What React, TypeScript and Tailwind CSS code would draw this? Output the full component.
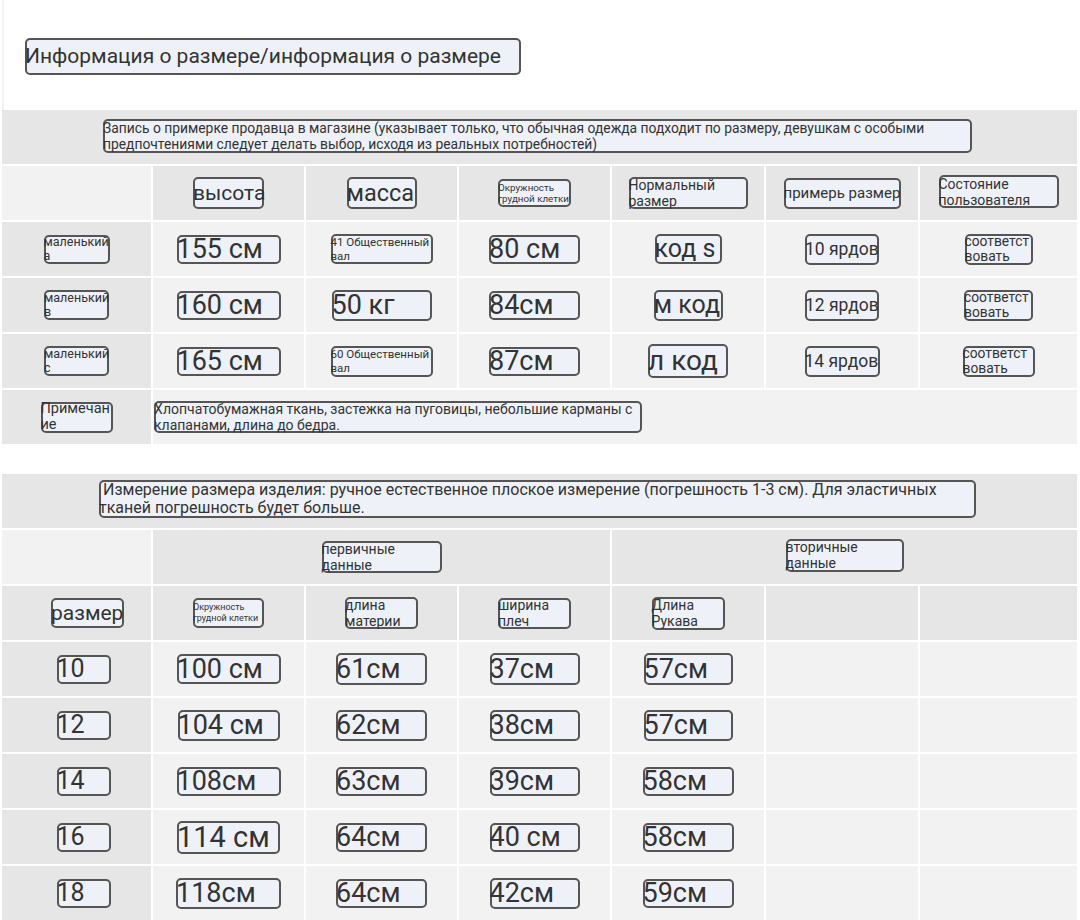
import React from "react";

type BoxProps = {
  w: number;
  h: number;
  fs: number;
  lh?: number;
  children: React.ReactNode;
};

function Box({ w, h, fs, lh, children }: BoxProps) {
  return (
    <div
      className="box-border flex flex-col justify-center overflow-visible whitespace-nowrap rounded-[5px] border-2 border-[#555] bg-[#eef2f8] text-[#333]"
      style={{ width: w, height: h, fontSize: fs, lineHeight: `${lh ?? Math.round(fs * 1.1)}px` }}
    >
      <div className="-ml-[2px]">{children}</div>
    </div>
  );
}

const dark = "bg-[#e6e6e6]";
const light = "bg-[#f2f2f2]";

function Cell({ tone, children, className = "" }: { tone: string; children?: React.ReactNode; className?: string }) {
  return <div className={`${tone} flex h-[54px] items-center justify-center ${className}`}>{children}</div>;
}

type B = { w: number; h: number; fs: number; lh?: number; t: React.ReactNode };

const fitRows: B[][] = [
  [
    { w: 66, h: 29, fs: 12.5, lh: 14, t: <>маленький<br />а</> },
    { w: 104, h: 29, fs: 27, lh: 28, t: "155 см" },
    { w: 102, h: 30, fs: 11.5, lh: 14, t: <>41 Общественный<br />вал</> },
    { w: 91, h: 29, fs: 27, lh: 28, t: "80 см" },
    { w: 67, h: 30, fs: 25, lh: 28, t: "код s" },
    { w: 74, h: 31, fs: 17.5, lh: 22, t: "10 ярдов" },
    { w: 68, h: 31, fs: 13.8, lh: 15, t: <>соответст<br />вовать</> },
  ],
  [
    { w: 65, h: 30, fs: 12.5, lh: 14, t: <>маленький<br />в</> },
    { w: 104, h: 29, fs: 27, lh: 28, t: "160 см" },
    { w: 100, h: 31, fs: 27, lh: 28, t: "50 кг" },
    { w: 91, h: 29, fs: 27, lh: 28, t: "84см" },
    { w: 69, h: 31, fs: 25, lh: 28, t: "м код" },
    { w: 74, h: 31, fs: 17.5, lh: 22, t: "12 ярдов" },
    { w: 69, h: 31, fs: 13.8, lh: 15, t: <>соответст<br />вовать</> },
  ],
  [
    { w: 65, h: 30, fs: 12.5, lh: 14, t: <>маленький<br />с</> },
    { w: 104, h: 29, fs: 27, lh: 28, t: "165 см" },
    { w: 102, h: 31, fs: 11.5, lh: 14, t: <>60 Общественный<br />вал</> },
    { w: 91, h: 29, fs: 27, lh: 28, t: "87см" },
    { w: 80, h: 34, fs: 28, lh: 30, t: "л код" },
    { w: 75, h: 31, fs: 17.5, lh: 22, t: "14 ярдов" },
    { w: 72, h: 31, fs: 13.8, lh: 15, t: <>соответст<br />вовать</> },
  ],
];

const measRows: B[][] = [
  [
    { w: 54, h: 29, fs: 25, lh: 28, t: "10" },
    { w: 104, h: 30, fs: 27, lh: 28, t: "100 см" },
    { w: 91, h: 32, fs: 27, lh: 28, t: "61см" },
    { w: 90, h: 32, fs: 27, lh: 28, t: "37см" },
    { w: 89, h: 32, fs: 27, lh: 28, t: "57см" },
  ],
  [
    { w: 54, h: 29, fs: 25, lh: 28, t: "12" },
    { w: 102, h: 31, fs: 27, lh: 28, t: "104 см" },
    { w: 91, h: 31, fs: 27, lh: 28, t: "62см" },
    { w: 90, h: 31, fs: 27, lh: 28, t: "38см" },
    { w: 89, h: 31, fs: 27, lh: 28, t: "57см" },
  ],
  [
    { w: 54, h: 29, fs: 25, lh: 28, t: "14" },
    { w: 104, h: 29, fs: 27, lh: 28, t: "108см" },
    { w: 91, h: 29, fs: 27, lh: 28, t: "63см" },
    { w: 90, h: 29, fs: 27, lh: 28, t: "39см" },
    { w: 91, h: 29, fs: 27, lh: 28, t: "58см" },
  ],
  [
    { w: 54, h: 29, fs: 25, lh: 28, t: "16" },
    { w: 103, h: 33, fs: 29, lh: 30, t: "114 см" },
    { w: 91, h: 29, fs: 27, lh: 28, t: "64см" },
    { w: 90, h: 29, fs: 27, lh: 28, t: "40 см" },
    { w: 91, h: 29, fs: 27, lh: 28, t: "58см" },
  ],
  [
    { w: 54, h: 29, fs: 25, lh: 28, t: "18" },
    { w: 105, h: 31, fs: 27, lh: 28, t: "118см" },
    { w: 91, h: 29, fs: 27, lh: 28, t: "64см" },
    { w: 90, h: 31, fs: 27, lh: 28, t: "42см" },
    { w: 91, h: 29, fs: 27, lh: 28, t: "59см" },
  ],
];

const gridCls =
  "grid grid-cols-[149px_151px_151px_151px_152px_152px_157px] gap-[2px]";

export default function App() {
  return (
    <div
      className="h-[920px] w-[1080px] overflow-hidden bg-white pl-[2px] text-[#333]"
      style={{ fontFamily: "Roboto, 'Noto Sans', sans-serif" }}
    >
      {/* Title */}
      <div className="flex h-[110px] items-center border-l-2 border-[#f3f3f3] pl-[21px] pt-[2px]">
        <Box w={496} h={37} fs={21} lh={24}>
          Информация о размере/информация о размере
        </Box>
      </div>

      {/* Section 1 */}
      <div className={gridCls}>
        <Cell tone={dark} className="col-span-7 pl-[4px]">
          <div className="-ml-[8px] -mt-[2px]">
            <Box w={869} h={34} fs={13.85} lh={16}>
              Запись о примерке продавца в магазине (указывает только, что обычная одежда подходит по размеру, девушкам с особыми
              <br />
              предпочтениями следует делать выбор, исходя из реальных потребностей)
            </Box>
          </div>
        </Cell>

        <Cell tone={light} />
        <Cell tone={dark}>
          <Box w={71} h={32} fs={21} lh={24}>высота</Box>
        </Cell>
        <Cell tone={dark}>
          <Box w={70} h={32} fs={23.5} lh={26}>масса</Box>
        </Cell>
        <Cell tone={dark}>
          <Box w={73} h={28} fs={9.8} lh={11}>
            Окружность
            <br />
            грудной клетки
          </Box>
        </Cell>
        <Cell tone={dark}>
          <Box w={119} h={32} fs={14} lh={16}>
            Нормальный
            <br />
            размер
          </Box>
        </Cell>
        <Cell tone={dark}>
          <Box w={117} h={31} fs={15} lh={17}>примерь размер</Box>
        </Cell>
        <Cell tone={dark}>
          <div className="-mt-[3px]">
            <Box w={120} h={33} fs={14} lh={16}>
              Состояние
              <br />
              пользователя
            </Box>
          </div>
        </Cell>

        {fitRows.map((row, ri) =>
          row.map((b, ci) => (
            <Cell key={`f${ri}-${ci}`} tone={ci === 0 ? dark : light}>
              <Box w={b.w} h={b.h} fs={b.fs} lh={b.lh}>
                {b.t}
              </Box>
            </Cell>
          ))
        )}

        <Cell tone={dark}>
          <Box w={72} h={31} fs={14.5} lh={16}>
            Примечан
            <br />
            ие
          </Box>
        </Cell>
        <Cell tone={light} className="col-span-6 !justify-start pl-[1px]">
          <Box w={488} h={32} fs={14} lh={16}>
            Хлопчатобумажная ткань, застежка на пуговицы, небольшие карманы с
            <br />
            клапанами, длина до бедра.
          </Box>
        </Cell>
      </div>

      <div className="h-[30px]" />

      {/* Section 2 */}
      <div className={gridCls}>
        <Cell tone={dark} className="col-span-7">
          <div className="-ml-[4px] -mt-[4px]">
            <Box w={877} h={38} fs={16} lh={18}>
              &nbsp;Измерение размера изделия: ручное естественное плоское измерение (погрешность 1-3 см). Для эластичных
              <br />
              тканей погрешность будет больше.
            </Box>
          </div>
        </Cell>

        <Cell tone={light} />
        <Cell tone={dark} className="col-span-3">
          <Box w={120} h={32} fs={14} lh={16}>
            первичные
            <br />
            данные
          </Box>
        </Cell>
        <Cell tone={dark} className="col-span-3">
          <div className="-mt-[4px]">
            <Box w={118} h={33} fs={14} lh={16}>
              вторичные
              <br />
              данные
            </Box>
          </div>
        </Cell>

        <Cell tone={dark}>
          <div className="ml-[22px]">
            <Box w={73} h={30} fs={21} lh={24}>размер</Box>
          </div>
        </Cell>
        <Cell tone={dark}>
          <Box w={71} h={30} fs={9} lh={11}>
            Окружность
            <br />
            грудной клетки
          </Box>
        </Cell>
        <Cell tone={dark}>
          <Box w={73} h={32} fs={14} lh={16}>
            длина
            <br />
            материи
          </Box>
        </Cell>
        <Cell tone={dark}>
          <Box w={73} h={31} fs={14} lh={16}>
            ширина
            <br />
            плеч
          </Box>
        </Cell>
        <Cell tone={dark}>
          <Box w={73} h={33} fs={14} lh={16}>
            Длина
            <br />
            Рукава
          </Box>
        </Cell>
        <Cell tone={dark} />
        <Cell tone={dark} />

        {measRows.map((row, ri) => (
          <React.Fragment key={`m${ri}`}>
            {row.map((b, ci) => (
              <Cell key={`m${ri}-${ci}`} tone={ci === 0 ? dark : light}>
                <div className={ci === 0 ? "ml-[14px]" : ""}>
                  <Box w={b.w} h={b.h} fs={b.fs} lh={b.lh}>
                    {b.t}
                  </Box>
                </div>
              </Cell>
            ))}
            <Cell tone={light} />
            <Cell tone={light} />
          </React.Fragment>
        ))}
      </div>
    </div>
  );
}
